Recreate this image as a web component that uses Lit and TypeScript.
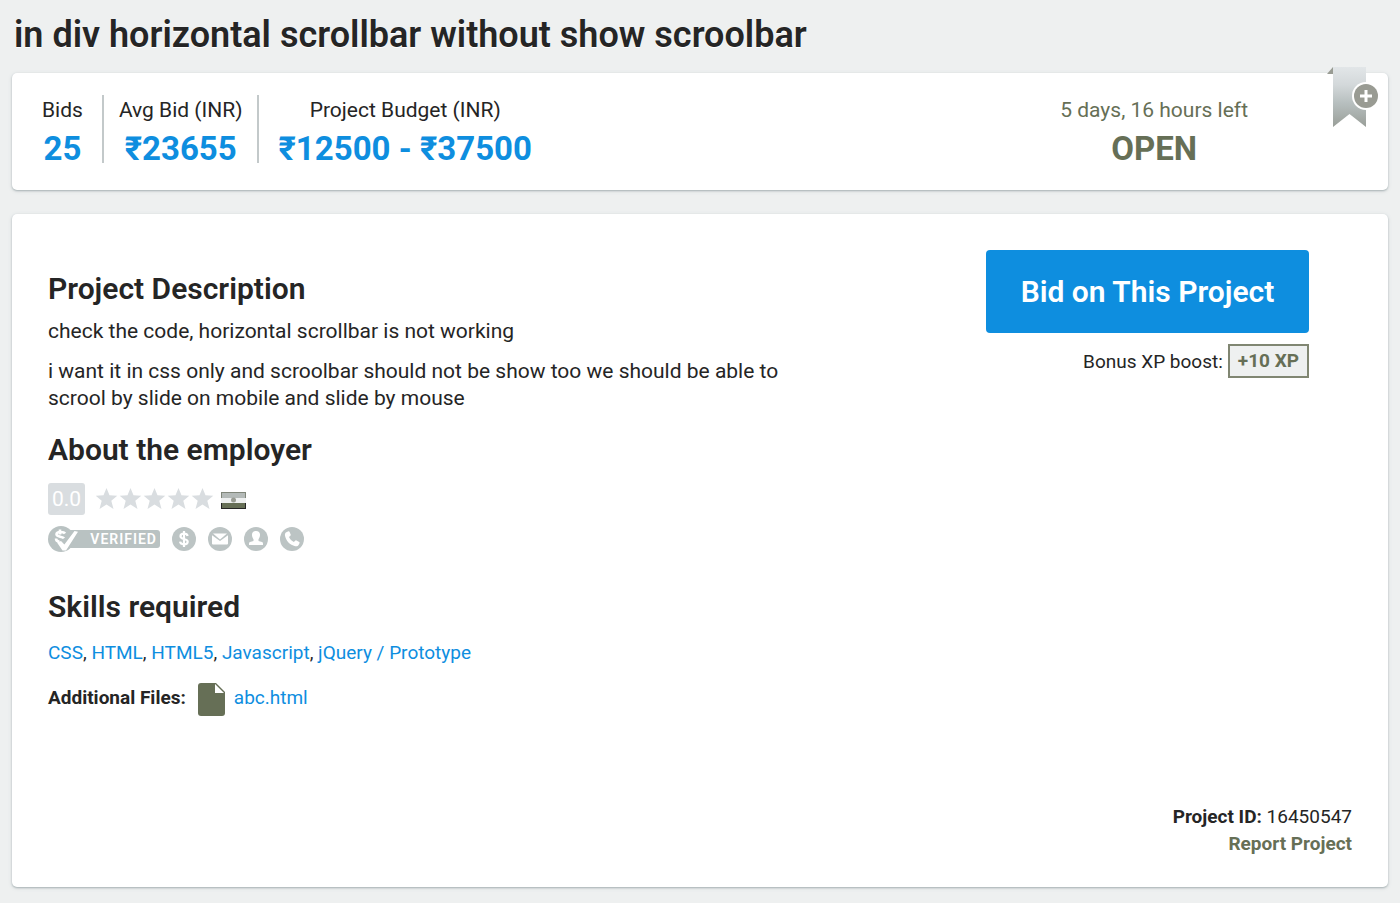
import { LitElement, html, css, svg } from "lit";
import { customElement } from "lit/decorators.js";

const badges = [
  {
    label: "Payment verified",
    glyph: svg`<path d="M12 4v16M15.600 9c-.3-1.500-1.700-2.300-3.600-2.300s-3.500.900-3.500 2.500c0 3.700 7.200 1.800 7.200 5.500 0 1.700-1.600 2.600-3.700 2.600s-3.700-.900-3.900-2.600" fill="none" stroke="#fff" stroke-width="2.200"/>`,
  },
  {
    label: "Email verified",
    glyph: svg`<path d="M4 8.200v8.300q0 1 1 1h14q1 0 1-1V8.200L12 14z" fill="#fff"/><path d="M5 6.500h14l-7 6z" fill="#fff"/>`,
  },
  {
    label: "Profile completed",
    glyph: svg`<path d="M12 4c2.800 0 4.200 1.900 4 4.300-.100 1.800-.900 3-1.500 4v1.700l3.500 1q1 .4 1 1.500V18H5v-1.500q0-1.100 1-1.500l3.500-1v-1.700c-.600-1-1.400-2.200-1.500-4C7.800 5.900 9.200 4 12 4z" fill="#fff"/>`,
  },
  {
    label: "Phone verified",
    glyph: svg`<path d="M6.300 5.200 8.500 4.300q.7-.2 1 .5l1.200 2.800q.2.600-.3 1.100L9 10c1 2.200 2.600 3.900 4.900 5l1.500-1.400q.5-.4 1.100-.1l2.700 1.400q.6.400.4 1l-1 2.200c-.6 1.100-1.900 1.400-3.400 1.100C9.900 18 6 13.800 5 8.800c-.3-1.600.1-3 1.300-3.600z" fill="#fff"/>`,
  },
];

const skills = ["CSS", "HTML", "HTML5", "Javascript", "jQuery / Prototype"];

@customElement("app-root")
export class AppRoot extends LitElement {
  static styles = css`
    :host {
      display: block;
      box-sizing: border-box;
      min-height: 100vh;
      padding: 12px 12px 15px;
      background: #eef0f0;
      color: #252525;
      font: 400 21px/27px Roboto, "Noto Sans", sans-serif;
    }
    * {
      box-sizing: border-box;
    }
    h1,
    h2,
    p,
    dl,
    dt,
    dd,
    ul {
      margin: 0;
      padding: 0;
    }
    a {
      color: #0e8edf;
      text-decoration: none;
    }
    h1 {
      margin: 0 2px 15px;
      font-size: 36px;
      line-height: 46px;
      font-weight: 600;
      text-shadow: 0 1px 0 #fff;
    }
    h2 {
      font-size: 30px;
      line-height: 36px;
      font-weight: 600;
    }
    .card {
      position: relative;
      background: #fff;
      border-radius: 5px;
      box-shadow: 0 1px 2px #aab4b6, 0 1px 4px #d5dadc;
    }
    .summary {
      display: flex;
      justify-content: space-between;
      padding: 22px 140px 27px 30px;
      margin-bottom: 24px;
    }
    .stats {
      display: flex;
    }
    .stat {
      text-align: center;
    }
    .stat dt {
      margin-bottom: 10px;
      line-height: 30px;
    }
    .stat dd {
      font-size: 33px;
      line-height: 28px;
      font-weight: 700;
      color: #0e8edf;
    }
    .stats .stat + .stat {
      margin-left: 19px;
      padding-left: 15px;
      border-left: 2px solid #c3c9ca;
    }
    .stats .stat + .stat + .stat {
      margin-left: 15px;
      padding-left: 19px;
    }
    .status dt,
    .status dd {
      color: #666f56;
    }
    .bookmark {
      position: absolute;
      top: -7px;
      right: 8px;
      width: 54px;
      height: 64px;
      padding: 0;
      border: 0;
      background: none;
    }
    svg {
      display: block;
    }
    .detail {
      display: flex;
      flex-direction: column;
      padding: 36px 36px 30px;
    }
    .columns {
      display: flex;
      justify-content: space-between;
    }
    .main {
      width: 740px;
      padding-top: 21px;
    }
    .main p {
      margin-bottom: 13px;
    }
    .main h2 {
      margin-bottom: 11px;
    }
    .main p + h2 {
      margin-top: 20px;
    }
    .rating {
      display: flex;
      align-items: center;
      height: 32px;
      margin: 15px 0 10px;
    }
    .score {
      width: 37px;
      margin-right: 11px;
      border-radius: 3px;
      background: #d9dde0;
      color: #fff;
      line-height: 32px;
      text-align: center;
    }
    .flag {
      margin: 2px 0 0 7px;
    }
    .badges {
      display: flex;
      align-items: center;
      gap: 12px;
      height: 28px;
      margin-bottom: 36px;
      list-style: none;
    }
    .verified {
      display: flex;
      align-items: center;
      position: relative;
      width: 112px;
      height: 28px;
    }
    .verified span {
      width: 100%;
      margin-left: 12px;
      padding-right: 3px;
      border-radius: 3px;
      background: #b9c2c2;
      color: #fff;
      font-size: 14px;
      line-height: 18px;
      font-weight: 600;
      letter-spacing: 1px;
      text-align: right;
    }
    .verified svg {
      position: absolute;
      left: 0;
      top: 0;
    }
    .skills {
      margin-top: 14px;
      font-size: 19px;
    }
    .files {
      display: flex;
      align-items: center;
      height: 36px;
      font-size: 19px;
    }
    .files svg {
      margin: 4px 8px 0 12px;
    }
    b {
      font-weight: 700;
    }
    .action {
      margin-right: 43px;
      text-align: right;
    }
    .bid {
      display: block;
      width: 323px;
      height: 83px;
      border: 0;
      border-radius: 4px;
      background: #0e8edf;
      color: #fff;
      font: 600 30px/36px Roboto, sans-serif;
    }
    .bonus {
      display: flex;
      align-items: center;
      justify-content: flex-end;
      gap: 5px;
      margin-top: 11px;
      font-size: 19px;
    }
    .xp {
      padding: 0 8px;
      border: 2px solid #808672;
      background: #eef0f0;
      color: #666f56;
      font-weight: 700;
      line-height: 30px;
    }
    .foot {
      margin-top: 88px;
      text-align: right;
      font-size: 19px;
    }
    .foot a {
      color: #666f56;
      font-weight: 700;
    }
  `;

  render() {
    return html`
      <h1>in div horizontal scrollbar without show scroolbar</h1>
      <section class="card summary">
        <dl class="stats">
          <div class="stat"><dt>Bids</dt><dd>25</dd></div>
          <div class="stat"><dt>Avg Bid (INR)</dt><dd>₹23655</dd></div>
          <div class="stat"><dt>Project Budget (INR)</dt><dd>₹12500 - ₹37500</dd></div>
        </dl>
        <dl class="stat status"><dt>5 days, 16 hours left</dt><dd>OPEN</dd></dl>
        <button class="bookmark" aria-label="Bookmark project">
          <svg width="54" height="64" viewBox="0 0 54 64">
            <defs>
              <linearGradient id="ribbon" x1="0" y1="0" x2="0" y2="1">
                <stop offset="0" stop-color="#e2e6e8" />
                <stop offset=".3" stop-color="#d3d8da" />
                <stop offset=".6" stop-color="#b7bfbf" />
                <stop offset="1" stop-color="#999e98" />
              </linearGradient>
            </defs>
            <path d="M1 8 7 1v7z" fill="#999c93" />
            <path d="M7 1h33v60L23.500 48 7 61z" fill="url(#ribbon)" />
            <circle cx="40" cy="30" r="14" fill="#fff" />
            <circle cx="40" cy="30" r="12" fill="#999b93" />
            <path d="M40 24v12M34 30h12" stroke="#fff" stroke-width="3" />
          </svg>
        </button>
      </section>
      <section class="card detail">
        <div class="columns">
          <div class="main">
            <h2>Project Description</h2>
            <p>check the code, horizontal scrollbar is not working</p>
            <p>
              i want it in css only and scroolbar should not be show too we should be able to
              scrool by slide on mobile and slide by mouse
            </p>
            <h2>About the employer</h2>
            <div class="rating">
              <span class="score">0.0</span>
              <svg width="118" height="24" viewBox="0 0 118 24" role="img" aria-label="0 of 5 stars">
                ${[0, 1, 2, 3, 4].map(
                  (i) => svg`<path transform="translate(${i * 24} 0)" fill="#d9dde0"
                    d="M10.500 1l3 7.300 7.800.5-6 5 2.200 8.200-7-4.500-7 4.500 2.200-8.200-6-5 7.800-.5z"/>`
                )}
              </svg>
              <svg class="flag" width="25" height="17" viewBox="0 0 25 17" role="img" aria-label="India">
                <path fill="#b4bab8" d="M0 0h25v6H0z" />
                <path fill="#eef0f0" d="M0 6h25v5H0z" />
                <path fill="#666f56" d="M0 11h25v6H0z" />
                <path fill="#80867a" d="M0 0h25v1H0zM0 0h1v6H0zM24 0h1v6h-1z" />
                <path fill="#252525" d="M0 16h25v1H0zM0 11h1v6H0zM24 11h1v6h-1z" />
                <circle cx="12.500" cy="8" r="2.500" fill="#999c93" />
              </svg>
            </div>
            <ul class="badges">
              <li class="verified">
                <span>VERIFIED</span>
                <svg width="32" height="28" viewBox="0 0 32 28" aria-hidden="true">
                  <circle cx="13" cy="14" r="13" fill="#b9c2c2" />
                  <path d="M12 4.500v5M17 8.500c-1-1.700-8.500-2.400-8.500.800 0 2.700 6 1.900 7.500 4M8 13.500c0 2 1.500 3 3.500 3.200" fill="none" stroke="#fff" stroke-width="2.600" />
                  <path d="M9 17.500l4-1.500 3.400 3.600L26.500 6l3.500.8L18 25.500h-3.500z" fill="#fff" />
                </svg>
              </li>
              ${badges.map(
                (b) => html`<li>
                  <svg width="24" height="24" viewBox="0 0 24 24" role="img" aria-label=${b.label}>
                    <circle cx="12" cy="12" r="12" fill="#bcc4c4" />
                    ${b.glyph}
                  </svg>
                </li>`
              )}
            </ul>
            <h2>Skills required</h2>
            <p class="skills">
              ${skills.map((s, i) => html`${i ? ", " : ""}<a href="#">${s}</a>`)}
            </p>
            <div class="files">
              <b>Additional Files:</b>
              <svg width="28" height="33" viewBox="0 0 28 33" aria-hidden="true">
                <path d="M3 0h15l9 9v21q0 3-3 3H3q-3 0-3-3V3q0-3 3-3z" fill="#666f56" />
                <path d="M17 1l9 9h-9z" fill="#fff" />
              </svg>
              <a href="#">abc.html</a>
            </div>
          </div>
          <div class="action">
            <button class="bid">Bid on This Project</button>
            <div class="bonus">Bonus XP boost: <span class="xp">+10 XP</span></div>
          </div>
        </div>
        <footer class="foot">
          <div><b>Project ID:</b> 16450547</div>
          <a href="#">Report Project</a>
        </footer>
      </section>
    `;
  }
}
